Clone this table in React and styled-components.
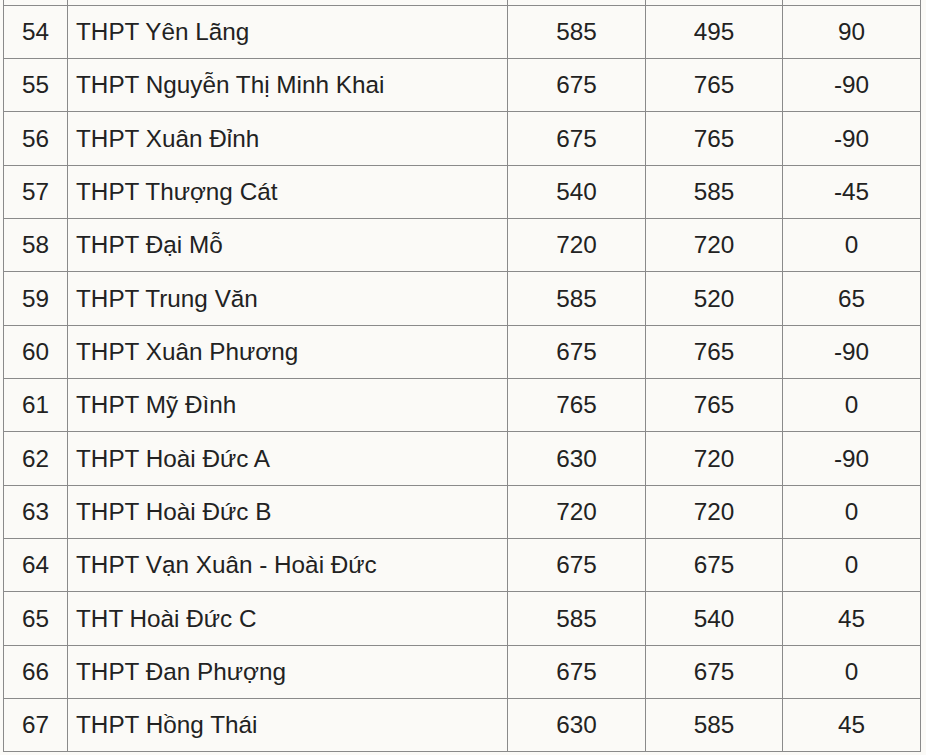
import React from "react";
import styled, { createGlobalStyle } from "styled-components";

const Global = createGlobalStyle`
  html, body { margin: 0; padding: 0; background: #fbfaf7; }
  body { font-family: "Liberation Sans", Arial, sans-serif; }
`;

const Page = styled.div`
  width: 926px;
  height: 755px;
  overflow: hidden;
  background: #fbfaf7;
  padding-left: 3px;
  box-sizing: border-box;
`;

const Table = styled.table`
  border-collapse: collapse;
  table-layout: fixed;
  width: 917px;
  margin-top: -1px;
  color: #222;
  font-size: 24.3px;
`;

const Row = styled.tr`
  height: ${(p) => (p.$partial ? "6.3px" : "53.33px")};
`;

const Cell = styled.td`
  border: 1px solid #8a8a8a;
  ${(p) => (p.$partial ? "border-top: none;" : "")}
  padding: ${(p) => (p.$partial ? "0" : "0 8px 1px 8px")};
  text-align: ${(p) => (p.$left ? "left" : "center")};
  vertical-align: middle;
  white-space: nowrap;
  line-height: 27px;
`;

const rows = [
  [54, "THPT Yên Lãng", 585, 495, 90],
  [55, "THPT Nguyễn Thị Minh Khai", 675, 765, -90],
  [56, "THPT Xuân Đỉnh", 675, 765, -90],
  [57, "THPT Thượng Cát", 540, 585, -45],
  [58, "THPT Đại Mỗ", 720, 720, 0],
  [59, "THPT Trung Văn", 585, 520, 65],
  [60, "THPT Xuân Phương", 675, 765, -90],
  [61, "THPT Mỹ Đình", 765, 765, 0],
  [62, "THPT Hoài Đức A", 630, 720, -90],
  [63, "THPT Hoài Đức B", 720, 720, 0],
  [64, "THPT Vạn Xuân - Hoài Đức", 675, 675, 0],
  [65, "THT Hoài Đức C", 585, 540, 45],
  [66, "THPT Đan Phượng", 675, 675, 0],
  [67, "THPT Hồng Thái", 630, 585, 45],
];

export default function App() {
  return (
    <>
      <Global />
      <Page>
        <Table>
          <colgroup>
            <col style={{ width: 64 }} />
            <col style={{ width: 440 }} />
            <col style={{ width: 138 }} />
            <col style={{ width: 137 }} />
            <col style={{ width: 138 }} />
          </colgroup>
          <tbody>
            <Row $partial>
              {[0, 1, 2, 3, 4].map((i) => (
                <Cell key={i} $partial />
              ))}
            </Row>
            {rows.map((r) => (
              <Row key={r[0]}>
                <Cell>{r[0]}</Cell>
                <Cell $left>{r[1]}</Cell>
                <Cell>{r[2]}</Cell>
                <Cell>{r[3]}</Cell>
                <Cell>{r[4]}</Cell>
              </Row>
            ))}
          </tbody>
        </Table>
      </Page>
    </>
  );
}
